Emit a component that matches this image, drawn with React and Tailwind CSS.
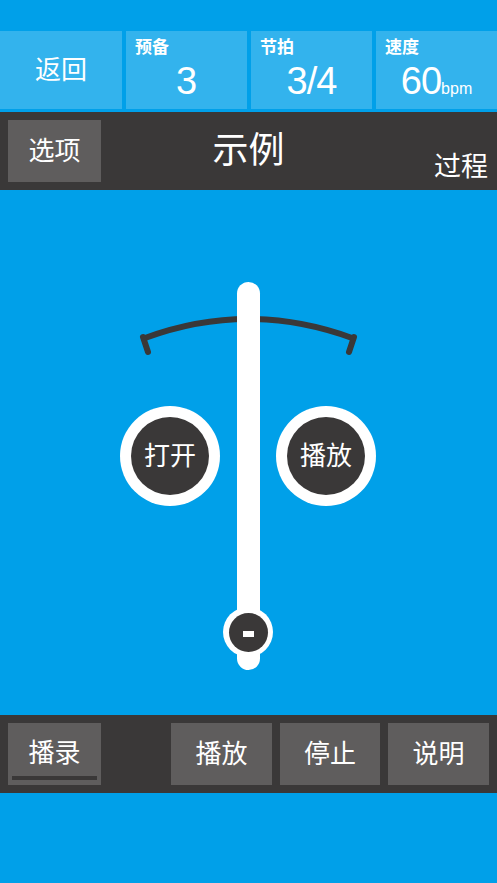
import React from 'react'

const font = { fontFamily: '"Roboto", "Noto Sans CJK SC", sans-serif' }
const numFont = { fontFamily: '"Liberation Sans", Arial, sans-serif' }

function StatCell({ label, children }) {
  return (
    <div className="flex-1 bg-[#33b3ed] flex flex-col px-[9px] pt-[6px] text-white">
      <div className="text-[17px] font-bold leading-[20px]">{label}</div>
      <div className="flex-1 flex justify-center items-baseline pt-[4px]" style={numFont}>{children}</div>
    </div>
  )
}

function GrayButton({ children, className = '' }) {
  return (
    <div className={`bg-[#5f5d5d] flex items-center justify-center text-white text-[26px] ${className}`}>
      {children}
    </div>
  )
}

export default function App() {
  return (
    <div className="w-[497px] h-[883px] bg-[#00a0e9] flex flex-col overflow-hidden" style={font}>
      <div className="h-[31px]" />

      {/* top stats row */}
      <div className="h-[78px] flex gap-[4px]">
        <div className="w-[122px] bg-[#33b3ed] flex items-center justify-center text-white text-[26px]">返回</div>
        <StatCell label="预备">
          <span className="text-[38px] leading-[40px]">3</span>
        </StatCell>
        <StatCell label="节拍">
          <span className="text-[38px] leading-[40px] tracking-[-1px]">3/4</span>
        </StatCell>
        <StatCell label="速度">
          <span className="text-[38px] leading-[40px] tracking-[-1px]">60</span>
          <span className="text-[16px] leading-[40px]">bpm</span>
        </StatCell>
      </div>

      <div className="h-[3px]" />

      {/* title bar */}
      <div className="h-[78px] bg-[#3a3838] flex items-center px-[8px] relative">
        <GrayButton className="w-[93px] h-[62px]">选项</GrayButton>
        <div className="absolute inset-x-0 top-[17px] text-center text-white text-[36px] leading-[44px]">示例</div>
        <div className="absolute right-[9px] bottom-[6px] text-white text-[27px] leading-[34px]">过程</div>
      </div>

      {/* metronome */}
      <div className="h-[525px] relative">
        <svg className="absolute left-0 top-0" width="497" height="525">
          <path d="M145 148 Q248 110 352 148" fill="none" stroke="#3a3838" strokeWidth="6" />
          <path d="M143 147 L148 162" fill="none" stroke="#3a3838" strokeWidth="6" strokeLinecap="round" />
          <path d="M354 147 L349 162" fill="none" stroke="#3a3838" strokeWidth="6" strokeLinecap="round" />
        </svg>
        <div className="absolute left-[237px] top-[92px] w-[23px] h-[388px] bg-white rounded-full" />

        <div className="absolute left-[120px] top-[216px] w-[100px] h-[100px] rounded-full bg-white flex items-center justify-center">
          <div className="w-[78px] h-[78px] rounded-full bg-[#3a3838] flex items-center justify-center text-white text-[26px]">打开</div>
        </div>
        <div className="absolute left-[276px] top-[216px] w-[100px] h-[100px] rounded-full bg-white flex items-center justify-center">
          <div className="w-[78px] h-[78px] rounded-full bg-[#3a3838] flex items-center justify-center text-white text-[26px]">播放</div>
        </div>

        <div className="absolute left-[223px] top-[417px] w-[50px] h-[50px] rounded-full bg-white flex items-center justify-center">
          <div className="w-[39px] h-[39px] rounded-full bg-[#3a3838] flex items-center justify-center">
            <div className="w-[11px] h-[6px] bg-white mt-[3px]" />
          </div>
        </div>
      </div>

      {/* bottom bar */}
      <div className="h-[78px] bg-[#3a3838] flex items-center px-[8px] gap-[8px]">
        <div className="w-[93px] h-[62px] bg-[#5f5d5d] flex flex-col items-center text-white text-[26px] pt-[13px]">
          <span className="leading-[34px]">播录</span>
          <div className="mt-auto mb-[5px] w-[85px] h-[4px] bg-[#3a3838]" />
        </div>
        <div className="flex-1" />
        <GrayButton className="w-[101px] h-[62px]">播放</GrayButton>
        <GrayButton className="w-[100px] h-[62px]">停止</GrayButton>
        <GrayButton className="w-[101px] h-[62px]">说明</GrayButton>
      </div>
    </div>
  )
}
